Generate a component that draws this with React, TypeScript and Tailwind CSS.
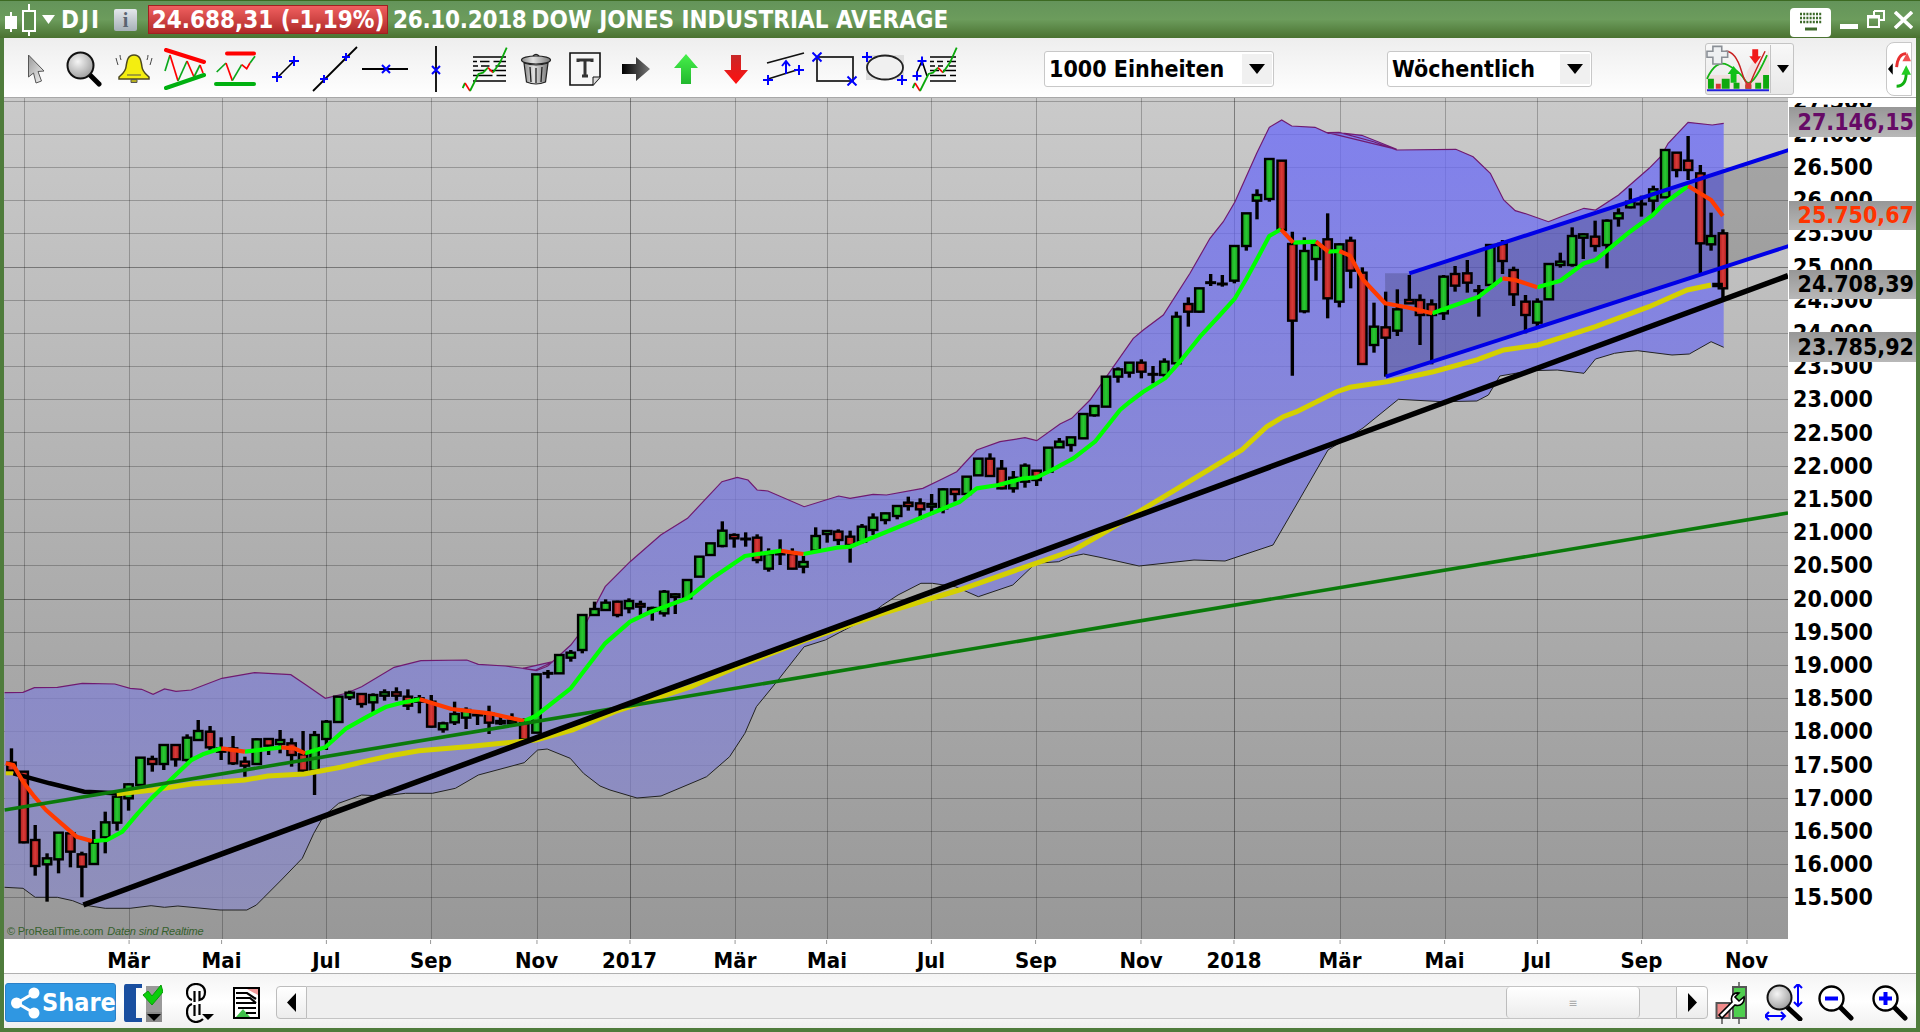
import { ReactNode } from "react";

type Crop = { ox: number; oy: number; sx: number; sy: number };
type Row = [number, number, number, number, number, number];
type Pt = [number, number];

// data was read off zoomed crops, so each list keeps its own crop scale
const c5: Crop = { ox: 1320, oy: 100, sx: 600 / 1568, sy: 1 / 3 };
const c6: Crop = { ox: 0, oy: 660, sx: 600 / 1568, sy: 1 / 3 };
const c7: Crop = { ox: 500, oy: 480, sx: 600 / 1568, sy: 1 / 3 };
const c8: Crop = { ox: 1000, oy: 110, sx: 1 / 3, sy: 1 / 3 };
const c9: Crop = { ox: 940, oy: 400, sx: 1 / 3, sy: 1 / 3 };
const real: Crop = { ox: 0, oy: 0, sx: 1, sy: 1 };

const conv = (p: Pt[], c: Crop): Pt[] => p.map(([x, y]) => [c.ox + x * c.sx, c.oy + y * c.sy]);
const line = (p: Pt[]) => p.map(([x, y]) => `${x.toFixed(1)},${y.toFixed(1)}`).join(" ");
const snap = (v: number) => Math.round(v) + 0.5;

// x, wick top, wick bottom, body top, body bottom, 1 green / 0 red
const rows6: Row[] = [
  [30, 265, 345, 308, 332, 0], [62, 335, 550, 335, 547, 0], [92, 495, 647, 540, 618, 0], [123, 580, 725, 595, 613, 1],
  [153, 517, 640, 518, 598, 1], [184, 512, 622, 520, 575, 0], [214, 575, 712, 583, 620, 0], [245, 510, 612, 548, 612, 1],
  [275, 455, 580, 487, 532, 1], [306, 395, 512, 410, 488, 1], [336, 370, 452, 373, 415, 1], [367, 293, 375, 293, 375, 1],
  [398, 287, 335, 297, 312, 0], [428, 255, 330, 255, 312, 1], [459, 255, 320, 255, 298, 0], [489, 223, 305, 233, 300, 1],
  [518, 180, 243, 213, 240, 1], [549, 198, 270, 215, 262, 0], [578, 232, 300, 265, 275, 0], [609, 228, 315, 265, 310, 0],
  [640, 290, 350, 305, 317, 0], [671, 235, 315, 238, 312, 1], [702, 235, 285, 237, 257, 0], [732, 210, 280, 240, 252, 1],
  [762, 235, 320, 250, 285, 0], [792, 213, 335, 283, 332, 0], [822, 213, 405, 225, 332, 1], [853, 180, 270, 185, 237, 1],
  [884, 110, 186, 110, 186, 1], [914, 92, 120, 98, 112, 1], [945, 100, 143, 102, 132, 0], [975, 100, 157, 105, 127, 1],
  [1005, 88, 122, 97, 107, 1], [1036, 82, 122, 97, 107, 0], [1066, 88, 150, 110, 137, 0], [1096, 105, 160, 115, 125, 1],
  [1127, 105, 203, 125, 200, 0], [1158, 185, 218, 190, 208, 1], [1188, 125, 195, 162, 187, 1], [1218, 142, 207, 150, 173, 1],
  [1248, 150, 195, 165, 165, 1], [1278, 137, 222, 160, 188, 0], [1308, 165, 195, 183, 190, 0], [1338, 160, 200, 182, 190, 1],
  [1370, 175, 240, 185, 238, 0], [1402, 43, 218, 43, 218, 1], [1432, 30, 55, 40, 40, 1],
];
const rows7: Row[] = [
  [155, 525, 580, 525, 580, 1], [185, 510, 545, 518, 533, 1], [215, 405, 520, 405, 510, 1], [247, 365, 407, 387, 405, 1],
  [276, 358, 392, 368, 390, 1], [307, 362, 412, 365, 405, 0], [337, 355, 400, 363, 385, 1], [367, 362, 405, 372, 380, 0],
  [398, 380, 422, 384, 392, 0], [429, 330, 410, 335, 400, 1], [458, 340, 402, 343, 351, 1], [489, 300, 355, 300, 355, 1],
  [521, 230, 290, 230, 290, 1], [550, 190, 225, 190, 225, 1], [581, 124, 202, 152, 198, 1], [612, 160, 203, 165, 175, 0],
  [642, 157, 200, 177, 177, 1], [672, 163, 250, 173, 240, 0], [702, 205, 275, 222, 266, 1], [732, 178, 255, 222, 222, 1],
  [764, 205, 268, 222, 266, 0], [793, 228, 280, 246, 260, 1], [825, 142, 212, 168, 212, 1], [855, 152, 188, 153, 162, 1],
  [884, 148, 195, 155, 180, 0], [915, 152, 248, 170, 195, 0], [946, 132, 190, 140, 185, 1], [975, 100, 165, 113, 150, 1],
  [1007, 98, 133, 100, 120, 1], [1038, 75, 118, 78, 108, 1], [1067, 50, 92, 68, 78, 0], [1098, 55, 120, 70, 88, 0],
  [1128, 42, 105, 72, 80, 1], [1158, 25, 100, 28, 85, 1],
];
const rows9: Row[] = [
  [45, 268, 305, 268, 282, 0], [80, 230, 285, 230, 282, 1], [115, 176, 226, 176, 226, 1], [150, 160, 230, 176, 228, 0],
  [185, 180, 268, 206, 265, 0], [220, 213, 278, 233, 265, 1], [255, 190, 263, 197, 245, 1], [290, 210, 258, 212, 240, 0],
  [325, 143, 215, 143, 215, 1], [358, 114, 143, 125, 142, 1], [393, 112, 155, 112, 135, 1], [430, 42, 115, 42, 115, 1],
  [463, 15, 50, 18, 46, 1],
];
const rows8: Row[] = [
  [318, 800, 890, 800, 890, 1], [354, 772, 818, 778, 800, 1], [388, 758, 803, 758, 788, 1], [424, 748, 805, 758, 785, 0],
  [459, 768, 820, 793, 793, 1], [493, 745, 800, 755, 795, 1], [529, 605, 765, 620, 760, 1], [565, 562, 650, 582, 605, 0],
  [598, 535, 608, 535, 605, 1], [632, 492, 528, 518, 518, 1], [667, 495, 530, 522, 522, 1], [703, 408, 520, 408, 512, 1],
  [739, 310, 422, 310, 408, 1], [771, 238, 328, 255, 272, 1], [808, 147, 275, 147, 267, 1], [845, 150, 360, 152, 360, 0],
  [877, 365, 797, 402, 632, 0], [913, 382, 610, 423, 604, 1], [948, 392, 512, 405, 447, 1], [983, 310, 625, 388, 565, 0],
  [1018, 400, 592, 403, 575, 1], [1052, 380, 535, 392, 482, 0], [1087, 472, 765, 488, 762, 0], [1122, 578, 728, 650, 705, 1],
  [1157, 545, 800, 652, 683, 0], [1192, 538, 678, 598, 662, 1], [1228, 495, 580, 570, 580, 0], [1260, 553, 705, 570, 615, 0],
];
const rows5: Row[] = [
  [292, 598, 793, 613, 645, 0], [323, 525, 660, 530, 640, 1], [353, 498, 575, 522, 557, 0], [385, 480, 578, 520, 548, 0],
  [415, 555, 650, 572, 572, 1], [445, 435, 555, 435, 555, 1], [477, 420, 522, 432, 483, 0], [506, 500, 618, 510, 583, 0],
  [537, 585, 700, 605, 645, 0], [568, 595, 678, 605, 668, 1], [598, 492, 598, 492, 598, 1], [628, 458, 503, 485, 495, 1],
  [659, 382, 500, 408, 495, 1], [688, 400, 477, 403, 413, 1], [719, 362, 455, 410, 438, 0], [750, 358, 505, 362, 435, 1],
  [780, 325, 380, 340, 355, 1], [811, 265, 325, 305, 322, 1], [840, 287, 350, 312, 312, 1], [871, 257, 342, 268, 302, 1],
  [902, 150, 292, 150, 292, 1], [932, 158, 232, 158, 210, 0], [962, 108, 240, 182, 210, 0], [994, 195, 522, 220, 430, 0],
  [1022, 338, 452, 408, 433, 1], [1053, 388, 598, 400, 565, 0],
];

const upper: Pt[] = [
  ...conv([[12, 98], [60, 97], [90, 83], [150, 82], [215, 70], [300, 72], [340, 85], [370, 88], [400, 103], [430, 87], [460, 94], [500, 90], [580, 55], [665, 38], [760, 44], [800, 75], [850, 115], [905, 100], [945, 80], [1030, 22], [1100, 2], [1220, 0], [1250, 13], [1320, 18], [1400, 30], [1445, 5]], c6),
  ...conv([[60, 565], [95, 572], [125, 558], [185, 495], [215, 450], [275, 320], [340, 245], [420, 165], [490, 115], [580, 5], [620, -8], [648, 0], [672, 30], [700, 33], [795, 80], [885, 48], [915, 55], [975, 43], [1010, 45], [1105, 25], [1150, 0]], c7),
  ...conv([[50, 215], [110, 150], [180, 125], [255, 113], [290, 122], [360, 72], [395, 55], [450, 0]], c9),
  ...conv([[400, 685], [430, 660], [490, 615], [570, 490], [630, 385], [670, 335], [705, 275], [770, 130], [808, 52], [845, 30], [875, 48], [945, 52], [985, 70], [1015, 68], [1085, 76], [1190, 118]], c8),
  ...conv([[20, 98], [50, 97], [140, 125], [200, 150], [355, 148], [400, 170], [445, 220], [480, 300], [510, 332], [540, 342], [597, 365], [630, 350], [690, 325], [720, 330], [780, 285], [860, 205], [890, 170], [910, 130], [962, 67], [1025, 75], [1055, 70]], c5),
];
const lower: Pt[] = [
  ...conv([[12, 682], [60, 685], [92, 712], [150, 712], [190, 722], [218, 735], [275, 745], [340, 745], [395, 737], [430, 742], [465, 738], [575, 750], [645, 750], [670, 735], [735, 660], [790, 595], [820, 520], [845, 470], [885, 430], [945, 405], [1000, 408], [1060, 400], [1130, 400], [1190, 385], [1250, 345], [1370, 308], [1405, 270], [1430, 267], [1490, 295], [1525, 340], [1568, 378]], c6),
  [610, 790], [637, 798], [661, 796],
  ...conv([[520, 900], [540, 890], [600, 830], [640, 760], [670, 680], [720, 610], [795, 500], [850, 480], [900, 450], [950, 420], [1000, 375], [1040, 345], [1100, 310], [1130, 310], [1190, 320], [1250, 350], [1340, 315], [1400, 250], [1460, 245], [1490, 230], [1525, 222], [1568, 232]], c7),
  ...conv([[1139, 566], [1194, 560], [1225, 561], [1273, 545], [1298, 502], [1328, 450], [1363, 428]], real),
  ...conv([[205, 898], [320, 905], [410, 903], [440, 885], [470, 828], [550, 812], [620, 810], [690, 820], [720, 777], [770, 760], [800, 755], [830, 752], [920, 765], [965, 762], [1022, 725], [1055, 742]], c5),
];

const greens = [
  conv([[245, 543], [280, 540], [320, 515], [360, 460], [400, 410], [450, 355], [500, 300], [530, 283], [578, 265]], c6),
  conv([[640, 275], [690, 268], [735, 262]], c6),
  conv([[797, 280], [850, 262], [905, 205], [960, 170], [1010, 140], [1050, 128], [1097, 118]], c6),
  [...conv([[1370, 183], [1400, 168]], c6), ...conv([[185, 625], [275, 490], [340, 425], [395, 395], [490, 355], [560, 290], [640, 228], [735, 212]], c7)],
  [
    ...conv([[793, 222], [880, 203], [915, 200]], c7),
    ...conv([[60, 305], [110, 265], [175, 255], [250, 235], [290, 232], [345, 205], [400, 175], [465, 125], [540, 30]], c9),
    ...conv([[390, 875], [430, 845], [495, 805], [540, 755], [600, 680], [660, 615], [705, 565], [740, 505], [775, 440], [808, 378], [843, 358]], c8),
  ],
  conv([[880, 398], [948, 395]], c8),
  conv([[985, 425], [1018, 423]], c8),
  conv([[1297, 610]], c8).concat(conv([[415, 590], [477, 535]], c5)),
  conv([[568, 562], [628, 542], [690, 490], [720, 480], [810, 395], [870, 345], [900, 310], [962, 258]], c5),
];
const reds = [
  conv([[15, 310], [35, 315], [60, 365], [90, 410], [120, 450], [160, 490], [200, 530], [240, 543]], c6),
  conv([[578, 265], [640, 275]], c6),
  conv([[735, 262], [770, 265], [797, 280]], c6),
  conv([[1097, 118], [1180, 147], [1280, 160], [1370, 183]], c6),
  conv([[735, 212], [765, 218], [793, 222]], c7),
  conv([[843, 358], [880, 398]], c8),
  conv([[948, 395], [985, 425]], c8),
  conv([[1018, 423], [1050, 437], [1090, 510], [1155, 580], [1220, 592], [1297, 610]], c8),
  conv([[477, 535], [510, 540], [568, 562]], c5),
  conv([[962, 258], [1022, 300], [1053, 348]], c5),
];
const yellow: Pt[] = [
  ...conv([[305, 402], [400, 390], [500, 372], [640, 360], [700, 348], [795, 342], [890, 322], [950, 305], [1020, 287], [1095, 272], [1220, 260], [1310, 250], [1400, 240]], c6),
  ...conv([[190, 750], [300, 695], [500, 620], [620, 560], [800, 480], [1000, 400], [1200, 330], [1400, 250], [1500, 210], [1568, 165]], c7),
  ...conv([[725, 1020], [800, 950], [850, 920], [890, 905], [1010, 845], [1050, 832], [1160, 815], [1300, 785], [1430, 750]], c8),
  ...conv([[420, 775], [480, 750], [570, 735], [720, 680], [860, 620], [960, 570], [1022, 555]], c5),
];

const months: [number, string, boolean][] = [
  [128.6, "Mär", false], [221.5, "Mai", false], [326.3, "Jul", false], [431, "Sep", false], [536.5, "Nov", false],
  [629.5, "2017", true], [735, "Mär", false], [827, "Mai", false], [931, "Jul", false], [1036, "Sep", false],
  [1141, "Nov", false], [1234, "2018", true], [1340, "Mär", false], [1444.5, "Mai", false], [1537, "Jul", false],
  [1641.5, "Sep", false], [1746.5, "Nov", false],
];

const priceY = (p: number) => 897.3 - (p - 15500) * 0.0664;
const prices: number[] = [];
for (let p = 15500; p <= 27500; p += 500) prices.push(p);
const fmt = (p: number) => `${Math.floor(p / 1000)}.${String(p % 1000).padStart(3, "0")}`;

const quotes = [
  { top: 107, h: 30, text: "27.146,15", cls: "text-[#660a66]" },
  { top: 201, h: 29, text: "25.750,67", cls: "text-[#ff3300]" },
  { top: 270, h: 29, text: "24.708,39", cls: "text-black" },
  { top: 332, h: 30, text: "23.785,92", cls: "text-black" },
];

function Candles({ rows, crop }: { rows: Row[]; crop: Crop }) {
  return (
    <>
      {rows.map(([x, wt, wb, bt, bb, up]) => {
        const cx = crop.ox + x * crop.sx;
        const y1 = crop.oy + wt * crop.sy;
        const y2 = crop.oy + wb * crop.sy;
        const t = crop.oy + bt * crop.sy;
        const b = crop.oy + bb * crop.sy;
        return (
          <g key={x}>
            <line x1={cx} x2={cx} y1={y1} y2={y2} stroke="#000" strokeWidth={3.4} />
            {bt === bb ? (
              <rect x={cx - 5.5} y={t - 1.5} width={11} height={3} fill="#000" />
            ) : (
              <rect x={cx - 4.2} y={t} width={8.4} height={b - t} fill={up ? "url(#candleUp)" : "url(#candleDown)"} stroke="#000" strokeWidth={2.4} />
            )}
          </g>
        );
      })}
    </>
  );
}

function Chart() {
  const band = [...upper, ...[...lower].reverse()];
  return (
    <svg viewBox="4 98 1784 841" className="block h-[841px] w-[1784px]">
      <defs>
        <linearGradient id="bandFill" gradientUnits="userSpaceOnUse" x1="0" y1="100" x2="0" y2="900">
          <stop offset="0" stopColor="#6868fa" />
          <stop offset="1" stopColor="#8b8bc4" />
        </linearGradient>
        <linearGradient id="candleUp" x1="0" x2="1" y1="0" y2="0">
          <stop offset="0" stopColor="#149a1a" />
          <stop offset="0.5" stopColor="#2ac832" />
          <stop offset="1" stopColor="#149a1a" />
        </linearGradient>
        <linearGradient id="candleDown" x1="0" x2="1" y1="0" y2="0">
          <stop offset="0" stopColor="#a81c1c" />
          <stop offset="0.5" stopColor="#d83a38" />
          <stop offset="1" stopColor="#a81c1c" />
        </linearGradient>
      </defs>

      {prices.map((p) => (
        <line key={p} x1={4} x2={1788} y1={snap(priceY(p))} y2={snap(priceY(p))} stroke="#000" strokeOpacity={p % 5000 === 0 ? 0.38 : 0.24} strokeWidth={1} />
      ))}
      {[24, ...months.map((m) => m[0])].map((x, i) => (
        <line key={i} x1={snap(x)} x2={snap(x)} y1={98} y2={939} stroke="#000" strokeOpacity={i > 0 && months[i - 1][2] ? 0.38 : 0.24} strokeWidth={1} />
      ))}

      <polygon points={line(band)} fill="url(#bandFill)" fillOpacity={0.75} />
      <polyline points={line(upper)} fill="none" stroke="#701a70" strokeWidth={1.2} />
      <polyline points={line(lower)} fill="none" stroke="#222" strokeWidth={1} />

      <polygon points="1385,273.3 1410,273.3 1788,150 1788,246 1386,376.7" fill="#000" fillOpacity={0.17} />

      <Candles rows={rows6} crop={c6} />
      <Candles rows={rows7} crop={c7} />
      <Candles rows={rows9} crop={c9} />
      <Candles rows={rows8} crop={c8} />
      <Candles rows={rows5} crop={c5} />

      <polyline points={line(conv([[15, 340], [35, 340]], c6))} fill="none" stroke="#d4cc00" strokeWidth={4} />
      <polyline points={line(conv([[35, 340], [130, 370], [220, 395], [305, 400]], c6))} fill="none" stroke="#000" strokeWidth={4.5} />
      <polyline points={line(yellow)} fill="none" stroke="#d4d000" strokeWidth={5} />
      <polyline points={line(conv([[1025, 555], [1053, 555]], c5))} fill="none" stroke="#000" strokeWidth={4.5} />

      {greens.map((g, i) => (
        <polyline key={i} points={line(g)} fill="none" stroke="#00ff00" strokeWidth={4.2} strokeLinejoin="round" />
      ))}
      {reds.map((g, i) => (
        <polyline key={i} points={line(g)} fill="none" stroke="#ff3a00" strokeWidth={4.2} strokeLinejoin="round" />
      ))}

      <line x1={4.6} y1={810} x2={1788} y2={513} stroke="#0b7a0b" strokeWidth={3.6} />
      <line x1={1385.8} y1={376.7} x2={1788.8} y2={246} stroke="#0000e6" strokeWidth={4} />
      <line x1={1409.3} y1={273.3} x2={1788.8} y2={150} stroke="#0000e6" strokeWidth={4} />
      <line x1={83.4} y1={905} x2={1788} y2={275.7} stroke="#000" strokeWidth={5.5} />
    </svg>
  );
}

/* toolbar drawings */

function BlueCross({ x, y, s = 5 }: { x: number; y: number; s?: number }) {
  return <path d={`M${x - s} ${y}H${x + s}M${x} ${y - s}V${y + s}`} stroke="#0000ff" strokeWidth={2} fill="none" />;
}
function BlueX({ x, y, s = 4 }: { x: number; y: number; s?: number }) {
  return <path d={`M${x - s} ${y - s}L${x + s} ${y + s}M${x + s} ${y - s}L${x - s} ${y + s}`} stroke="#0000ff" strokeWidth={2} fill="none" />;
}

function FibLines({ withPeak = false }: { withPeak?: boolean }) {
  const left = withPeak ? 18 : 11;
  const right = 44;
  const mid = (left + right) / 2;
  return (
    <svg width="46" height="46" viewBox="0 0 46 46" className="shrink-0">
      <path
        d={`M${left} 11H${right}M${left} 15.5H${left + 4}M${left + 7} 15.5H${mid}M${mid + 4} 15.5H${right}M${left} 20H${left + 5}M${left + 8} 20H${mid}M${mid + 6} 20H${right}M${left} 24.5H${mid - 4}M${mid} 24.5H${right}M${left} 29.5H${mid + 3}M${mid + 7} 29.5H${right}M${left} 35H${right}`}
        stroke="#000"
        strokeWidth={1.5}
        fill="none"
      />
      {withPeak && (
        <>
          <path d="M5 26L10 15L15 30" stroke="#000" strokeWidth={1.6} fill="none" />
          <BlueCross x={10} y={15} s={4.5} />
          <BlueCross x={5} y={30} s={4.5} />
        </>
      )}
      <path d="M0.7 42L3 37" stroke="#0aa80a" strokeWidth={1.8} fill="none" />
      <path d="M3 37L8 45" stroke="#ff0000" strokeWidth={1.6} fill="none" />
      <path d="M8 45L16.5 28L21 26.6L26 21.6" stroke="#0aa80a" strokeWidth={1.8} fill="none" />
      <path d="M26 21.6L31 26.6" stroke="#ff0000" strokeWidth={1.6} fill="none" />
      <path d="M31 26.6L38 16.6L44.7 1.6" stroke="#0aa80a" strokeWidth={1.8} fill="none" />
    </svg>
  );
}

function Toolbar() {
  return (
    <div className="flex h-[60px] shrink-0 items-center border-b border-[#a8a8a8] bg-gradient-to-b from-[#eeeeee] to-white pt-[3px]">
      <svg width="18" height="30" viewBox="0 0 18 30" className="ml-[23px] shrink-0">
        <defs>
          <linearGradient id="arrowG" x1="0" x2="1" y1="0" y2="1">
            <stop offset="0" stopColor="#9a9a9a" />
            <stop offset="1" stopColor="#f4f4f4" />
          </linearGradient>
        </defs>
        <path d="M1.5 1L17 17L11 17.5L14.5 27L9 29L6.5 19L1.5 23Z" fill="url(#arrowG)" stroke="#555" strokeWidth={1} />
      </svg>
      <svg width="36" height="36" viewBox="0 0 36 36" className="ml-[21px] shrink-0">
        <defs>
          <radialGradient id="lens" cx="0.4" cy="0.35" r="0.7">
            <stop offset="0" stopColor="#f5f5f5" />
            <stop offset="1" stopColor="#9b9b9b" />
          </radialGradient>
        </defs>
        <path d="M22 22L33 33" stroke="#000" strokeWidth={5} strokeLinecap="round" />
        <circle cx="14.5" cy="14.5" r="13" fill="url(#lens)" stroke="#111" strokeWidth={2} />
      </svg>
      <svg width="38" height="32" viewBox="0 0 38 32" className="ml-[13px] shrink-0">
        <path d="M19 2C13 2 12 7 11 14C10.5 19 7 21 4 24V26H34V24C31 21 27.5 19 27 14C26 7 25 2 19 2Z" fill="#f4ee10" stroke="#4d4a20" strokeWidth={1.5} />
        <path d="M12 22H26" stroke="#555" strokeWidth={1} />
        <path d="M16 26.5H22V29.5H16Z" fill="#b8b020" stroke="#555" strokeWidth={1} />
        <path d="M1 5Q2 9 3 12M5 2Q5 4 6 7M37 5Q36 9 35 12M33 2Q33 4 32 7" stroke="#444" strokeWidth={1} fill="none" />
      </svg>
      <svg width="42" height="42" viewBox="0 0 42 42" className="ml-[11px] shrink-0">
        <path d="M1 23L6 7" stroke="#0ba81c" strokeWidth={1.7} fill="none" />
        <path d="M6 7L14 33" stroke="#ff0000" strokeWidth={1.7} fill="none" />
        <path d="M14 33L23 13" stroke="#0ba81c" strokeWidth={1.7} fill="none" />
        <path d="M23 13L30 29" stroke="#ff0000" strokeWidth={1.7} fill="none" />
        <path d="M30 29L36 17" stroke="#0ba81c" strokeWidth={1.7} fill="none" />
        <path d="M36 17L39 25" stroke="#ff0000" strokeWidth={1.7} fill="none" />
        <path d="M2 2L40 14" stroke="#ff0000" strokeWidth={4} strokeLinecap="round" />
        <path d="M2 40L40 27" stroke="#00b010" strokeWidth={4} strokeLinecap="round" />
      </svg>
      <svg width="43" height="38" viewBox="0 0 43 38" className="ml-[8px] shrink-0">
        <path d="M13 3.5H40" stroke="#ff0000" strokeWidth={4} strokeLinecap="round" />
        <path d="M2 34H40" stroke="#00b010" strokeWidth={4} strokeLinecap="round" />
        <path d="M2.7 22L12 13" stroke="#0ba81c" strokeWidth={1.7} fill="none" />
        <path d="M12 13L18.3 30.6" stroke="#ff0000" strokeWidth={1.7} fill="none" />
        <path d="M18.3 30.6L27.7 14.6" stroke="#0ba81c" strokeWidth={1.7} fill="none" />
        <path d="M27.7 14.6L32.7 18.6L36 13" stroke="#ff0000" strokeWidth={1.7} fill="none" />
        <path d="M36 13L41 6.3" stroke="#0ba81c" strokeWidth={1.7} fill="none" />
      </svg>
      <svg width="28" height="28" viewBox="0 0 28 28" className="ml-[15px] shrink-0">
        <path d="M5 23L22 6" stroke="#000" strokeWidth={1.6} />
        <BlueCross x={5} y={22} />
        <BlueCross x={22} y={6} />
      </svg>
      <svg width="46" height="46" viewBox="0 0 46 46" className="ml-[12px] shrink-0">
        <path d="M1 45L45 1" stroke="#000" strokeWidth={1.8} />
        <BlueCross x={12} y={33} s={4} />
        <BlueCross x={34} y={11} s={4} />
      </svg>
      <svg width="46" height="12" viewBox="0 0 46 12" className="ml-[4px] shrink-0">
        <path d="M0 6H46" stroke="#000" strokeWidth={1.8} />
        <BlueX x={24} y={6} />
      </svg>
      <svg width="12" height="46" viewBox="0 0 12 46" className="ml-[22px] shrink-0">
        <path d="M6 0V46" stroke="#000" strokeWidth={1.8} />
        <BlueX x={6} y={24} />
      </svg>
      <span className="ml-[20px] shrink-0">
        <FibLines />
      </span>
      <svg width="32" height="32" viewBox="0 0 32 32" className="ml-[12px] shrink-0">
        <defs>
          <linearGradient id="bin" x1="0" x2="1" y1="0" y2="0">
            <stop offset="0" stopColor="#888" />
            <stop offset="0.4" stopColor="#e2e2e2" />
            <stop offset="1" stopColor="#777" />
          </linearGradient>
        </defs>
        <path d="M13 3Q16 0 19 3" stroke="#222" strokeWidth={1.5} fill="none" />
        <ellipse cx="16" cy="7" rx="14.5" ry="4" fill="url(#bin)" stroke="#222" strokeWidth={1.2} />
        <path d="M4 10L6.5 29Q16 33 25.5 29L28 10Q16 14 4 10Z" fill="url(#bin)" stroke="#222" strokeWidth={1.2} />
        <path d="M10 14L11 29M16 15V30M22 14L21 29" stroke="#222" strokeWidth={1.3} />
      </svg>
      <svg width="34" height="34" viewBox="0 0 34 34" className="ml-[16px] shrink-0">
        <path d="M2 1H32V25L25 33H2Z" fill="#f6f6f6" stroke="#111" strokeWidth={1.6} />
        <path d="M32 25H25V33" fill="#ddd" stroke="#111" strokeWidth={1} />
        <path d="M10 10V8H24V10M17 8V24M14 24H20" stroke="#333" strokeWidth={3} fill="none" />
      </svg>
      <svg width="28" height="24" viewBox="0 0 28 24" className="ml-[20px] shrink-0">
        <defs>
          <linearGradient id="blackArr" x1="0" x2="1" y1="0" y2="0">
            <stop offset="0" stopColor="#000" />
            <stop offset="1" stopColor="#777" />
          </linearGradient>
        </defs>
        <path d="M0 7H14V0L28 12L14 24V17H0Z" fill="url(#blackArr)" />
      </svg>
      <svg width="24" height="30" viewBox="0 0 24 30" className="ml-[24px] shrink-0">
        <defs>
          <linearGradient id="upArr" x1="0" x2="0" y1="0" y2="1">
            <stop offset="0" stopColor="#46f04a" />
            <stop offset="1" stopColor="#22b82e" />
          </linearGradient>
        </defs>
        <path d="M12 0L24 14H17V30H7V14H0Z" fill="url(#upArr)" />
      </svg>
      <svg width="24" height="29" viewBox="0 0 24 29" className="ml-[26px] shrink-0">
        <defs>
          <linearGradient id="dnArr" x1="0" x2="0" y1="0" y2="1">
            <stop offset="0" stopColor="#c82828" />
            <stop offset="1" stopColor="#ff1010" />
          </linearGradient>
        </defs>
        <path d="M7 0H17V15H24L12 29L0 15H7Z" fill="url(#dnArr)" />
      </svg>
      <svg width="45" height="34" viewBox="0 0 45 34" className="ml-[14px] shrink-0">
        <path d="M5 11L42 1M6 27L38 17" stroke="#111" strokeWidth={1.8} />
        <BlueCross x={6} y={28} />
        <BlueCross x={37} y={18} />
        <path d="M24 22V9M20 14L24 9L28 14" stroke="#0000ff" strokeWidth={2} fill="none" />
      </svg>
      <svg width="46" height="34" viewBox="0 0 46 34" className="ml-[5px] shrink-0">
        <rect x="5" y="5" width="36" height="24" fill="none" stroke="#222" strokeWidth={1.8} />
        <BlueX x={5} y={5} s={4.5} />
        <BlueX x={40} y={29} s={4.5} />
      </svg>
      <svg width="46" height="34" viewBox="0 0 46 34" className="ml-[4px] mr-[-3px] shrink-0">
        <rect x="4" y="3" width="38" height="25" fill="#dedede" />
        <ellipse cx="23" cy="15.5" rx="18" ry="12" fill="#f0f0f0" stroke="#222" strokeWidth={1.8} />
        <BlueCross x={5} y={5} />
        <BlueCross x={40} y={28} />
      </svg>
      <span className="ml-[7px] shrink-0">
        <FibLines withPeak />
      </span>

      <Dropdown label="1000 Einheiten" cls="ml-[86px] w-[230px]" />
      <Dropdown label="Wöchentlich" cls="ml-[113px] w-[205px]" />

      <div className="ml-[113px] flex h-[52px] w-[89px] shrink-0 items-center rounded-[3px] border border-[#c4c4c4] bg-gradient-to-b from-[#f8f8f8] to-[#e8e8e8]">
        <svg width="65" height="48" viewBox="0 0 65 48" className="shrink-0 border-r border-[#c4c4c4]">
          <path d="M34 30L38 40L42 26L50 12L58 22L64 4V46H0V30Z" fill="#f4d6d6" opacity={0.6} />
          <path d="M1 34Q10 14 22 20T40 36T62 10" stroke="#14b414" strokeWidth={1.8} fill="none" />
          <path d="M20 6Q30 6 36 26T46 36T60 6" stroke="#c82020" strokeWidth={1.5} fill="none" />
          <path d="M7 19V12H1V6H7V1H16V6H22V12H16V19Z" fill="#eef0f2" stroke="#8a8f96" strokeWidth={1.6} />
          <path d="M47 4H53V11H56L50 19L44 11H47Z" fill="#f01818" />
          <path d="M25 38V29H22L28 21L34 29H31V38Z" fill="#10c018" />
          <path d="M2 34H8V44H2ZM16 34H24V44H16ZM28 38H34V44H28ZM40 40H46V44H40ZM50 38H56V44H50ZM58 30H64V44H58Z" fill="#0ea80e" />
          <path d="M10 39H15V44H10ZM40 38H46V44H40Z" fill="#d83434" />
          <path d="M1 45.5H64" stroke="#2222dd" strokeWidth={2} />
        </svg>
        <svg width="12" height="8" viewBox="0 0 12 8" className="ml-[6px] shrink-0">
          <path d="M0 0H12L6 8Z" fill="#000" />
        </svg>
      </div>

      <div className="ml-[92px] flex h-[54px] w-[26px] shrink-0 items-center justify-start rounded-l-[8px] border border-[#c8c8c8] bg-white">
        <svg width="25" height="48" viewBox="0 0 25 48">
          <path d="M1 24L6 18V30Z" fill="#000" />
          <path d="M10 22C11 12 15 8 20 8" stroke="#e83030" strokeWidth={3} fill="none" />
          <path d="M16 16L21 7L25 16Z" fill="#f05050" />
          <path d="M10 42C18 42 20 36 20 28" stroke="#12b012" strokeWidth={3} fill="none" />
          <path d="M15 30L20 20L25 30Z" fill="#22cc22" />
        </svg>
      </div>
    </div>
  );
}

function Dropdown({ label, cls }: { label: string; cls: string }) {
  return (
    <div className={`flex h-[36px] shrink-0 items-center justify-between rounded-[3px] border border-[#c8c8c8] bg-white pl-[4px] pr-[1px] text-[23px] font-bold text-black ${cls}`}>
      <span>{label}</span>
      <span className="flex h-[30px] w-[30px] items-center justify-center bg-[#f0f0f0]">
        <svg width="16" height="10" viewBox="0 0 16 10">
          <path d="M0 0H16L8 10Z" fill="#000" />
        </svg>
      </span>
    </div>
  );
}

function TitleBar() {
  return (
    <div className="flex h-[38px] shrink-0 items-center border-t border-[#3c6a22] bg-gradient-to-b from-[#64945a] via-[#6c9c5c] to-[#4a7230] text-[24px] font-bold text-white">
      <svg width="36" height="32" viewBox="0 0 36 32" className="ml-[2px] shrink-0">
        <path d="M9 8V28M27 0V32" stroke="#fff" strokeWidth={2} />
        <rect x="3" y="12" width="12" height="13" fill="#fff" />
        <rect x="21" y="7" width="12" height="20" fill="#5d8d4d" stroke="#fff" strokeWidth={2} />
      </svg>
      <svg width="13" height="9" viewBox="0 0 13 9" className="ml-[4px] shrink-0">
        <path d="M0 0H13L6.5 9Z" fill="#fff" />
      </svg>
      <span className="ml-[6px] w-[40px] tracking-[2px]">DJI</span>
      <span className="ml-[13px] flex h-[22px] w-[23px] shrink-0 items-center justify-center rounded-[2px] bg-gradient-to-b from-[#e4e8ec] to-[#a6b0b8] font-['Liberation_Serif',serif] text-[20px] text-[#5a6470]">
        i
      </span>
      <span className="ml-[11px] flex h-[29px] w-[240px] shrink-0 items-center justify-center border border-[#a02020] bg-gradient-to-b from-[#f06060] to-[#b02828]">
        24.688,31 (-1,19%)
      </span>
      <span className="ml-[5px] tracking-[-0.3px]">26.10.2018</span>
      <span className="ml-[5px]">DOW JONES INDUSTRIAL AVERAGE</span>

      <div className="ml-auto mr-[7px] flex items-center">
        <span className="mt-[6px] flex h-[29px] w-[41px] items-center justify-center rounded-[4px] bg-white">
          <svg width="26" height="22" viewBox="0 0 26 22">
            <path d="M2 2H24M2 6H24M2 10H24" stroke="#3d6a2a" strokeWidth={2.5} strokeDasharray="2 1.2" />
            <path d="M7 17H19" stroke="#3d6a2a" strokeWidth={3} />
          </svg>
        </span>
        <svg width="18" height="5" viewBox="0 0 18 5" className="ml-[9px] mt-[13px]">
          <path d="M0 0H18V5H0Z" fill="#fff" />
        </svg>
        <svg width="18" height="18" viewBox="0 0 18 18" className="ml-[9px] mb-[2px]">
          <path d="M7 1H17V10H13M7 1V5" stroke="#fff" strokeWidth={2} fill="none" />
          <rect x="1" y="6" width="11" height="11" fill="none" stroke="#fff" strokeWidth={2} />
          <path d="M1 7H12" stroke="#fff" strokeWidth={3} />
        </svg>
        <svg width="19" height="18" viewBox="0 0 19 18" className="ml-[9px]">
          <path d="M1 1L18 17M18 1L1 17" stroke="#fff" strokeWidth={3.6} />
        </svg>
      </div>
    </div>
  );
}

function ChainIcon() {
  return (
    <svg width="28" height="40" viewBox="0 0 28 40" className="ml-[23px] shrink-0">
      <path d="M6 17C2.5 16 1 13 1 9C1 4 5 1 10 1C15 1 19 4 19 9C19 13 17.5 16 13.5 17V8" stroke="#000" strokeWidth={2.2} fill="none" />
      <path d="M8.5 8V19" stroke="#000" strokeWidth={2.2} />
      <path d="M6 21C2.5 22 1 25 1 29C1 35 5 39 10 39C13 39 15 38 17 36M13.5 21V32M8.5 22V33" stroke="#000" strokeWidth={2.2} fill="none" />
      <path d="M16 31H28L22 37Z" fill="#000" />
    </svg>
  );
}

function IconButton({ children, cls }: { children: ReactNode; cls: string }) {
  return <span className={`flex shrink-0 items-center ${cls}`}>{children}</span>;
}

function BottomBar() {
  return (
    <div className="flex h-[54px] shrink-0 items-center bg-gradient-to-b from-[#f4f4f4] via-white to-[#f0f0f0] pr-[8px] pt-[3px]">
      <div className="ml-[1px] flex h-[39px] w-[111px] shrink-0 items-center rounded-[3px] border border-[#2b80c8] bg-[#2f97e2] pl-[4px] text-[25px] font-bold text-white">
        <svg width="30" height="34" viewBox="0 0 30 34" className="shrink-0">
          <path d="M24 7L7 17L24 27" stroke="#fff" strokeWidth={3} fill="none" />
          <circle cx="24" cy="7" r="5.5" fill="#fff" />
          <circle cx="6.5" cy="17" r="5.5" fill="#fff" />
          <circle cx="24" cy="27" r="5.5" fill="#fff" />
        </svg>
        <span className="ml-[2px]">Share</span>
      </div>

      <IconButton cls="ml-[8px]">
        <svg width="39" height="38" viewBox="0 0 39 38">
          <path d="M18 0H2Q0 0 0 3V35Q0 38 2 38H18V34H12V4H18Z" fill="#1a4fa0" />
          <rect x="22" y="2" width="16" height="30" fill="#9a9a9a" />
          <path d="M19 11L24 7L28 12L37 1L39 8L28 21Z" fill="#0bcf0b" stroke="#0a9a0a" strokeWidth={1} />
          <rect x="22" y="28" width="16" height="10" fill="#8a8a8a" />
          <path d="M23 30H37L30 37Z" fill="#000" />
        </svg>
      </IconButton>

      <ChainIcon />

      <IconButton cls="ml-[19px]">
        <svg width="27" height="32" viewBox="0 0 27 32">
          <rect x="1" y="1" width="25" height="30" fill="#fff" stroke="#000" strokeWidth={2} />
          <path d="M14 2H25V8Z" fill="#ef9a9a" />
          <path d="M3 30L10 22L17 30Z" fill="#3fc04a" />
          <path d="M3 6H14L23 12M3 11H17L23 16M3 16H23M5 21H23M13 26H23" stroke="#000" strokeWidth={2.2} fill="none" />
        </svg>
      </IconButton>

      <button className="ml-[16px] flex h-[33px] w-[31px] shrink-0 items-center justify-center rounded-l-[4px] border border-[#bdbdbd] bg-gradient-to-b from-white to-[#ececec]">
        <svg width="9" height="19" viewBox="0 0 9 19">
          <path d="M9 0V19L0 9.5Z" fill="#000" />
        </svg>
      </button>
      <div className="flex h-[33px] flex-1 justify-end border-y border-[#c4c4c4] bg-[#efefef] pr-[36px]">
        <div className="flex w-[134px] items-center justify-center rounded-[4px] border-x border-[#bdbdbd] bg-gradient-to-b from-white to-[#ececec] text-[12px] text-[#aaa]">
          ≡
        </div>
      </div>
      <button className="flex h-[33px] w-[32px] shrink-0 items-center justify-center rounded-r-[4px] border border-[#bdbdbd] bg-gradient-to-b from-white to-[#ececec]">
        <svg width="9" height="19" viewBox="0 0 9 19">
          <path d="M0 0V19L9 9.5Z" fill="#000" />
        </svg>
      </button>

      <IconButton cls="ml-[7px]">
        <svg width="32" height="42" viewBox="0 0 32 42">
          <path d="M7 20V42M24 0V42" stroke="#555" strokeWidth={1.5} />
          <rect x="1.5" y="21" width="13" height="15" fill="#f08a8a" stroke="#555" strokeWidth={2} />
          <rect x="18" y="5" width="13" height="31" fill="#4fce4f" stroke="#555" strokeWidth={2} />
          <path d="M4 33L17 20C15 14 19 10 24 11L20 15L24 19L29 15C30 20 26 25 20 23L7 36Z" fill="#fff" stroke="#000" strokeWidth={1.6} />
        </svg>
      </IconButton>
      <IconButton cls="ml-[18px]">
        <svg width="39" height="37" viewBox="0 0 39 37">
          <defs>
            <radialGradient id="lens2" cx="0.4" cy="0.35" r="0.7">
              <stop offset="0" stopColor="#f5f5f5" />
              <stop offset="1" stopColor="#9b9b9b" />
            </radialGradient>
          </defs>
          <path d="M21 22L35 35" stroke="#000" strokeWidth={5} strokeLinecap="round" />
          <circle cx="14.5" cy="13.5" r="12" fill="url(#lens2)" stroke="#111" strokeWidth={2} />
          <path d="M33 0V22M29 4L33 0L37 4M29 18L33 22L37 18" stroke="#0000ff" strokeWidth={2} fill="none" />
          <path d="M0 32H20M4 28L0 32L4 36M16 28L20 32L16 36" stroke="#0000ff" strokeWidth={2} fill="none" />
        </svg>
      </IconButton>
      <IconButton cls="ml-[14px]">
        <svg width="36" height="36" viewBox="0 0 36 36">
          <path d="M21 21L33 33" stroke="#000" strokeWidth={5} strokeLinecap="round" />
          <circle cx="13.5" cy="13.5" r="12" fill="#fff" stroke="#000" strokeWidth={2.4} />
          <path d="M7 13.5H20" stroke="#0000ff" strokeWidth={4} />
        </svg>
      </IconButton>
      <IconButton cls="ml-[18px]">
        <svg width="36" height="36" viewBox="0 0 36 36">
          <path d="M21 21L33 33" stroke="#000" strokeWidth={5} strokeLinecap="round" />
          <circle cx="13.5" cy="13.5" r="12" fill="#fff" stroke="#000" strokeWidth={2.4} />
          <path d="M7 13.5H20M13.5 7V20" stroke="#0000ff" strokeWidth={4} />
        </svg>
      </IconButton>
    </div>
  );
}

export default function App() {
  return (
    <div className="flex h-[1032px] w-[1920px] flex-col overflow-hidden bg-[#4f7c3c] font-['DejaVu_Sans_Condensed','DejaVu_Sans',sans-serif]">
      <TitleBar />
      <div className="mx-[4px] mb-[4px] flex flex-1 flex-col bg-white">
        <Toolbar />

        <div className="flex h-[842px] shrink-0">
          {/* chart panel */}
          <div className="relative h-[841px] w-[1784px] shrink-0 bg-gradient-to-b from-[#cacaca] to-[#989898]">
            <Chart />
            <div className="absolute bottom-0 left-[3px] flex gap-[4px] font-['Liberation_Sans',sans-serif] text-[11px] tracking-[-0.15px] text-[#35602c]">
              <span>© ProRealTime.com</span>
              <span className="italic">Daten sind Realtime</span>
            </div>
          </div>

          {/* price axis */}
          <div className="relative mt-[5px] flex-1 overflow-hidden text-[23px] font-bold text-black">
            {prices.map((p) => (
              <span key={p} className="absolute left-[5px] leading-[24px]" style={{ top: priceY(p) - 103 - 12 }}>
                {fmt(p)}
              </span>
            ))}
            {quotes.map((q) => (
              <span
                key={q.text}
                className={`absolute left-[1px] right-0 flex items-center justify-end bg-gradient-to-b from-[#979797] to-[#b8b8b8] pr-[2px] ${q.cls}`}
                style={{ top: q.top - 103, height: q.h }}
              >
                {q.text}
              </span>
            ))}
          </div>
        </div>

        {/* time axis */}
        <div className="relative h-[34px] shrink-0 border-b border-[#b0b0b0] text-[22px] font-bold text-black">
          {months.map(([x, label]) => (
            <span key={x} className="absolute top-0 -translate-x-1/2 text-center" style={{ left: x - 4 }}>
              <span className="mx-auto block h-[4px] w-px bg-[#999]" />
              <span className="block leading-[33px]">{label}</span>
            </span>
          ))}
        </div>

        <BottomBar />
      </div>
    </div>
  );
}
